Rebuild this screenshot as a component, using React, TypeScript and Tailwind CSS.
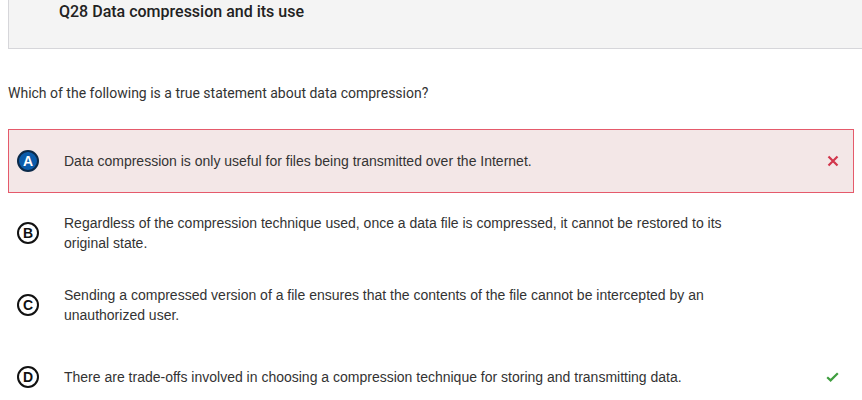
import React from 'react';

type Option = {
  id: string;
  text: string;
  state?: 'wrong' | 'right';
  selected?: boolean;
};

const options: Option[] = [
  { id: 'A', text: 'Data compression is only useful for files being transmitted over the Internet.', state: 'wrong', selected: true },
  { id: 'B', text: 'Regardless of the compression technique used, once a data file is compressed, it cannot be restored to its original state.' },
  { id: 'C', text: 'Sending a compressed version of a file ensures that the contents of the file cannot be intercepted by an unauthorized user.' },
  { id: 'D', text: 'There are trade-offs involved in choosing a compression technique for storing and transmitting data.', state: 'right' },
];

const Cross = () => (
  <svg width="12" height="12" viewBox="0 0 12 12" fill="none">
    <path d="M1.5 1.5 L10.5 10.5 M10.5 1.5 L1.5 10.5" stroke="#d2364c" strokeWidth="2.2" />
  </svg>
);

const Check = () => (
  <svg width="13" height="10" viewBox="0 0 13 10" fill="none">
    <path d="M1.2 5.2 L4.6 8.4 L11.8 1.2" stroke="#3f9e3f" strokeWidth="2.2" />
  </svg>
);

const Letter: React.FC<{ id: string; selected?: boolean }> = ({ id, selected }) =>
  selected ? (
    <div className="w-[22px] h-[22px] rounded-full bg-[#0a5bab] border-2 border-[#0b2a4a] flex items-center justify-center text-white text-[14px] font-bold leading-none font-['Liberation_Sans',Arial,sans-serif]">
      {id}
    </div>
  ) : (
    <div className="w-[22px] h-[22px] rounded-full border-2 border-[#111] flex items-center justify-center text-[#111] text-[14px] font-bold leading-none font-['Liberation_Sans',Arial,sans-serif]">
      {id}
    </div>
  );

export default function App() {
  return (
    <div className="w-[862px] h-[400px] overflow-hidden bg-white">
      <div className="ml-2 h-[49px] bg-[#f4f4f4] border-l border-b border-[#d6d6da] pl-[50px] pt-[2px]">
        <h2 className="font-['Roboto',sans-serif] font-medium text-[16px] leading-[20px] text-[#222]">
          Q28 Data compression and its use
        </h2>
      </div>

      <p className="mt-[34px] ml-2 font-['Roboto',sans-serif] text-[14px] leading-[20px] text-[#333]">
        Which of the following is a true statement about data compression?
      </p>

      <div className="mt-[26px] flex flex-col gap-2">
        {options.map((opt) => (
          <div
            key={opt.id}
            className={`mx-2 h-16 flex items-center border pl-2 pr-[14px] ${
              opt.selected ? 'border-[#e55a6b] bg-[#f3e7e7]' : 'border-transparent'
            }`}
          >
            <div className="w-[22px] flex justify-center">
              <Letter id={opt.id} selected={opt.selected} />
            </div>
            <div className="ml-[25px] w-[680px] font-['Liberation_Sans',Arial,sans-serif] text-[14px] leading-[20px] text-[#333]">
              {opt.text}
            </div>
            <div className="flex-1 flex justify-end">
              {opt.state === 'wrong' && <Cross />}
              {opt.state === 'right' && <Check />}
            </div>
          </div>
        ))}
      </div>
    </div>
  );
}
